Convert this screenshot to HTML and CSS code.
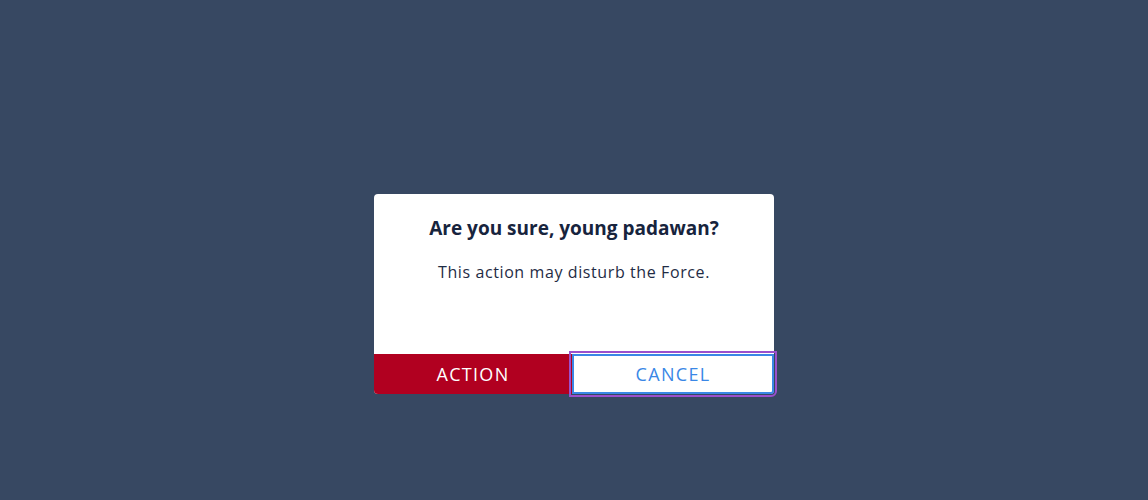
FILE: index.html
```html
<!DOCTYPE html>
<html>
<head>
<meta charset="utf-8">
<link rel="stylesheet" href="styles.css">
</head>
<body>
<div class="stage">
  <div class="dialog">
    <div class="content">
      <h2 class="title">Are you sure, young padawan?</h2>
      <p class="text">This action may disturb the Force.</p>
    </div>
    <div class="actions">
      <button class="btn btn-action">ACTION</button>
      <button class="btn btn-cancel">CANCEL</button>
    </div>
  </div>
</div>
</body>
</html>
```
FILE: styles.css
```css
html, body {
  margin: 0;
  padding: 0;
  height: 100%;
}
body {
  background: #374862;
  font-family: "Open Sans", "DejaVu Sans", sans-serif;
}
.stage {
  height: 500px;
  display: flex;
  justify-content: center;
  padding-top: 194px;
  box-sizing: border-box;
}
.dialog {
  width: 400px;
  height: 200px;
  background: #fff;
  border-radius: 4px;
  display: flex;
  flex-direction: column;
}
.content {
  flex: 1;
  text-align: center;
  padding-top: 20px;
}
.title {
  margin: 0;
  font-size: 19px;
  font-weight: 700;
  color: #17243d;
  line-height: 28px;
}
.text {
  margin: 19px 0 0;
  font-size: 16px;
  color: #1f2c45;
  line-height: 22px;
  letter-spacing: 0.6px;
}
.actions {
  display: flex;
  height: 40px;
}
.btn {
  font-family: "Open Sans", "DejaVu Sans", sans-serif;
  font-size: 18px;
  letter-spacing: 1.3px;
  margin: 0;
  padding: 0;
  cursor: pointer;
}
.btn-action {
  width: 198px;
  background: #b10020;
  color: #fff;
  border: none;
  border-radius: 0 0 0 4px;
}
.btn-cancel {
  width: 202px;
  background: #fff;
  color: #3a87e6;
  border: 2px solid #3a87e6;
  border-radius: 0 0 3px 0;
  outline: 2px solid #9b4fcc;
  outline-offset: 1px;
}
```
